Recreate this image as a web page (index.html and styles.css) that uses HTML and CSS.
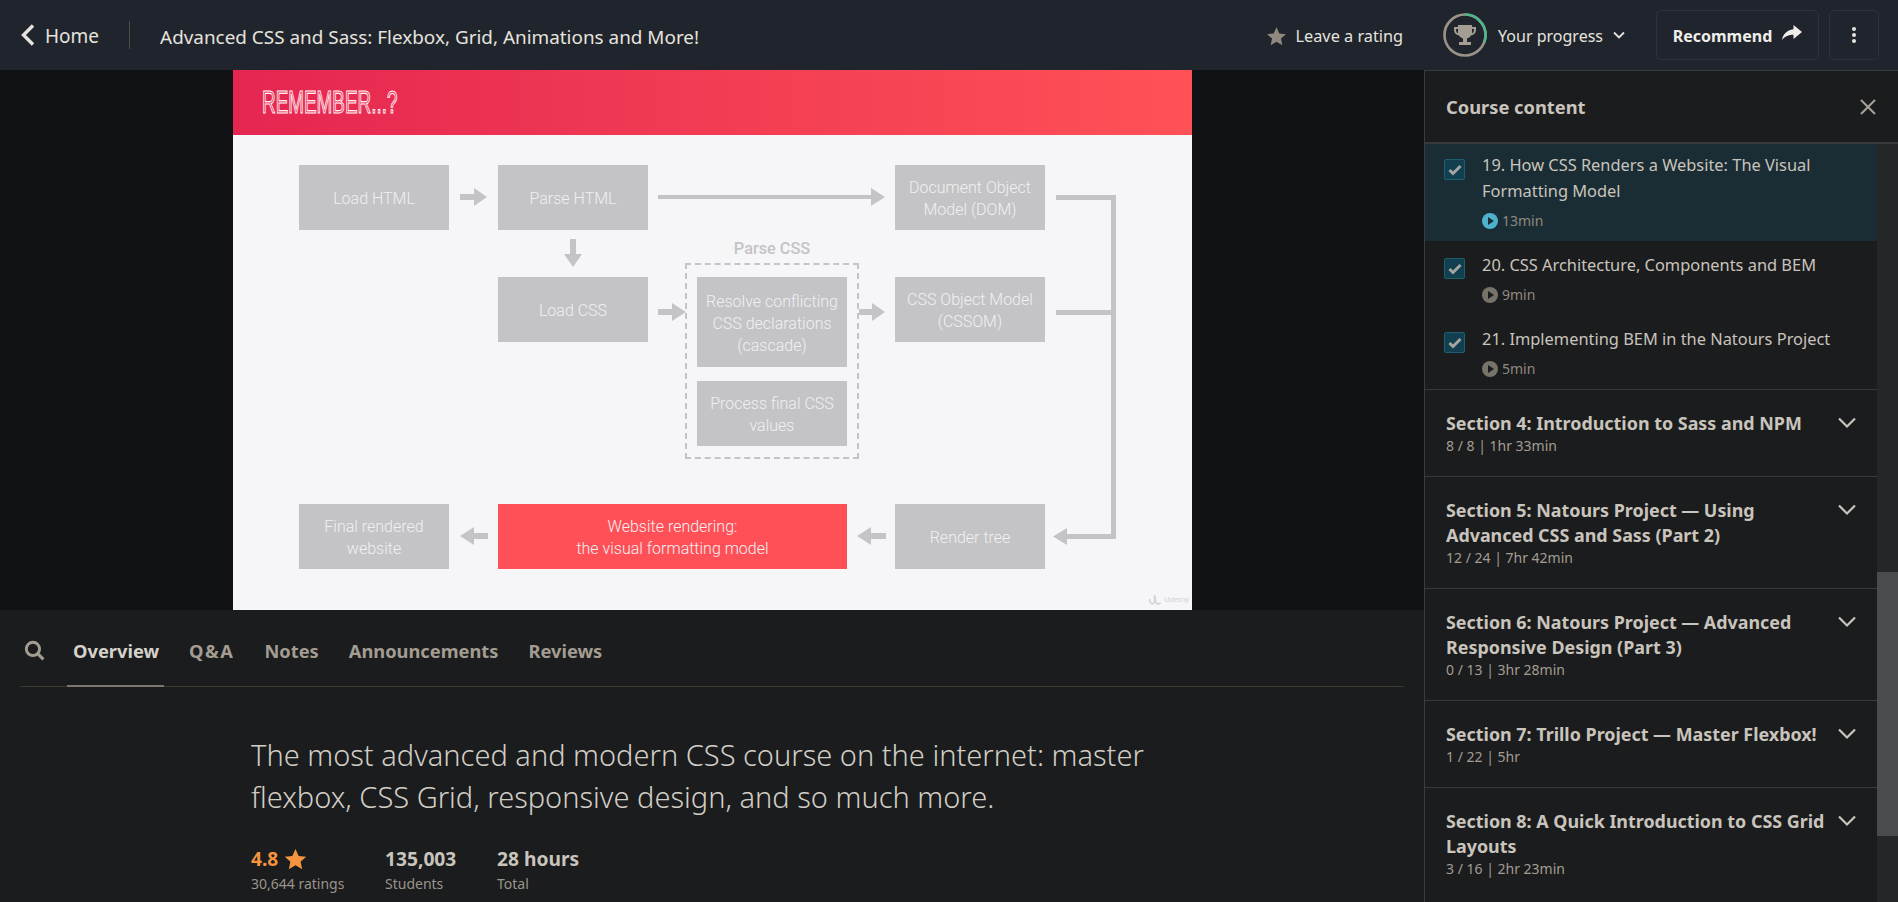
FILE: index.html
```html
<!DOCTYPE html>
<html lang="en">
<head>
    <meta charset="UTF-8">
    <meta name="viewport" content="width=device-width, initial-scale=1.0">
    <title>Advanced CSS and Sass</title>
    <link rel="stylesheet" href="styles.css">
</head>
<body>

    <!-- Top bar -->
    <header class="topbar">
        <a class="home-link">
            <svg class="home-chevron" viewBox="0 0 16 24"><path d="M13 2.5 3.5 12l9.5 9.5" fill="none" stroke="currentColor" stroke-width="3.4"/></svg>
            Home
        </a>
        <span class="topbar-divider"></span>
        <h1 class="course-title">Advanced CSS and Sass: Flexbox, Grid, Animations and More!</h1>

        <a class="rating-link">
            <svg class="icon-star" viewBox="0 0 24 24"><path d="M12 1.500l3.200 7 7.600.8-5.700 5.100 1.600 7.500L12 18l-6.700 3.900 1.600-7.500L1.200 9.300l7.600-.8z" fill="currentColor"/></svg>
            Leave a rating
        </a>
        <a class="progress-link">
            <svg class="progress-ring" viewBox="0 0 44 44">
                <circle cx="22" cy="22" r="20.5" fill="none" stroke="#9a9488" stroke-width="2.6"/>
                <path d="M22 1.500A20.500 20.500 0 0 1 41.300 29" fill="none" stroke="#4fb58a" stroke-width="2.6"/>
                <path d="M15 12h14v2h4v3c0 3-2 5-5 5.500-1 1.500-2.500 2.500-4 3V29h4v3H16v-3h4v-3.500c-1.500-.5-3-1.500-4-3C13 22 11 20 11 17v-3h4zm-2 4v1c0 1.500.8 2.600 2 3.200V16zm16 0v4.200c1.200-.6 2-1.700 2-3.200v-1z" fill="#a39d92"/>
            </svg>
            <span class="progress-text">Your progress</span>
            <svg class="small-chevron" viewBox="0 0 12 8"><path d="M1 1.500l5 5 5-5" fill="none" stroke="currentColor" stroke-width="1.800"/></svg>
        </a>
        <button class="btn btn-recommend">
            Recommend
            <svg class="icon-share" viewBox="0 0 20 16"><path d="M11.500 0 20 7l-8.500 7V9.800C6.500 9.800 3 11.200 0 15c.8-5.500 4.500-9.800 11.500-10.800z" fill="currentColor"/></svg>
        </button>
        <button class="btn btn-more">
            <span class="dot"></span><span class="dot"></span><span class="dot"></span>
        </button>
    </header>

    <div class="layout">
        <main class="main-col">

            <!-- Video area, the slide is a free canvas -->
            <section class="video-area">
                <div class="slide">
                    <div class="slide-head"><span class="slide-title">REMEMBER...?</span></div>

                    <svg class="slide-lines" viewBox="0 0 959 540">
                        <g fill="#c4c3c6">
                            <!-- load html to parse html -->
                            <path d="M227 124h14v-6l13 9-13 9v-6h-14z"/>
                            <!-- parse html to dom -->
                            <path d="M425 125h213v-7l14 9-14 9v-7H425z"/>
                            <!-- parse html to load css -->
                            <path d="M337 169h6v15h6l-9 13-9-13h6z"/>
                            <!-- load css to parse box -->
                            <path d="M425 239h14v-6l14 9-14 9v-6h-14z"/>
                            <!-- parse box to cssom -->
                            <path d="M626 239h13v-6l13 9-13 9v-6h-13z"/>
                            <!-- right connector down to render tree -->
                            <path d="M823 125h60v344h-49v6l-14-8.500 14-8.500v6h44V245h-55v-5h55V130h-55z"/>
                            <!-- render tree to red box -->
                            <path d="M653 463h-15v-6l-14 9 14 9v-6h15z"/>
                            <!-- red box to final -->
                            <path d="M255 463h-14v-6l-14 9 14 9v-6h14z"/>
                        </g>
                    </svg>

                    <div class="parse-box"></div>
                    <span class="parse-label">Parse CSS</span>

                    <div class="node node-load-html">Load HTML</div>
                    <div class="node node-parse-html">Parse HTML</div>
                    <div class="node node-dom">Document Object<br>Model (DOM)</div>
                    <div class="node node-load-css">Load CSS</div>
                    <div class="node node-resolve">Resolve conflicting<br>CSS declarations<br>(cascade)</div>
                    <div class="node node-cssom">CSS Object Model<br>(CSSOM)</div>
                    <div class="node node-process">Process final CSS<br>values</div>
                    <div class="node node-final">Final rendered<br>website</div>
                    <div class="node node-render active">Website rendering:<br>the visual formatting model</div>
                    <div class="node node-tree">Render tree</div>

                    <div class="slide-mark">
                        <svg viewBox="0 0 12 11"><path d="M1 5c-.5 3 1 5 2.500 5S6 8 5.500 1M6.500 3c-.5 4 .5 7 2.500 7 1 0 2-.5 2.500-1.500" fill="none" stroke="#d2d1d6" stroke-width="1.600"/></svg>
                        <span>Udemy</span>
                    </div>
                </div>
            </section>

            <!-- Tabs -->
            <nav class="tabs">
                <svg class="tab-search" viewBox="0 0 20 20"><circle cx="8.500" cy="8.500" r="6.300" fill="none" stroke="currentColor" stroke-width="2.800"/><path d="M13 13l5.500 5.500" stroke="currentColor" stroke-width="3"/></svg>
                <a class="tab active">Overview</a>
                <a class="tab tab-qa">Q&amp;A</a>
                <a class="tab">Notes</a>
                <a class="tab">Announcements</a>
                <a class="tab">Reviews</a>
            </nav>

            <!-- Overview -->
            <section class="overview">
                <p class="lead">The most advanced and modern CSS course on the internet: master flexbox, CSS Grid, responsive design, and so much more.</p>
                <div class="stats">
                    <div class="stat stat-rating">
                        <div class="stat-value">4.8 <svg class="icon-star-big" viewBox="0 0 24 24"><path d="M12 1l3.300 7.300 7.900.8-5.900 5.300 1.700 7.800L12 18.100l-7 4.100 1.700-7.800L.8 9.100l7.900-.8z" fill="currentColor"/></svg></div>
                        <div class="stat-label">30,644 ratings</div>
                    </div>
                    <div class="stat stat-students">
                        <div class="stat-value">135,003</div>
                        <div class="stat-label">Students</div>
                    </div>
                    <div class="stat">
                        <div class="stat-value">28 hours</div>
                        <div class="stat-label">Total</div>
                    </div>
                </div>
            </section>
        </main>

        <!-- Course content sidebar -->
        <aside class="sidebar">
            <div class="sidebar-head">
                <span class="sidebar-title">Course content</span>
                <svg class="icon-close" viewBox="0 0 18 18"><path d="M2 2l14 14M16 2 2 16" stroke="currentColor" stroke-width="2"/></svg>
            </div>
            <div class="sidebar-body">
                <div class="sidebar-list">
                    <div class="lesson current">
                        <span class="check"><svg viewBox="0 0 14 12"><path d="M1.500 6l3.500 3.500 7.500-7.500" fill="none" stroke="currentColor" stroke-width="3"/></svg></span>
                        <div>
                            <div class="lesson-name">19. How CSS Renders a Website: The Visual Formatting Model</div>
                            <div class="lesson-time"><svg class="icon-play" viewBox="0 0 16 16"><circle cx="8" cy="8" r="8" fill="currentColor"/><path d="M6 4l6 4-6 4z" fill="#1a2d35"/></svg>13min</div>
                        </div>
                    </div>
                    <div class="lesson">
                        <span class="check"><svg viewBox="0 0 14 12"><path d="M1.500 6l3.500 3.500 7.500-7.500" fill="none" stroke="currentColor" stroke-width="3"/></svg></span>
                        <div>
                            <div class="lesson-name">20. CSS Architecture, Components and BEM</div>
                            <div class="lesson-time"><svg class="icon-play" viewBox="0 0 16 16"><circle cx="8" cy="8" r="8" fill="currentColor"/><path d="M6 4l6 4-6 4z" fill="#1b1c1e"/></svg>9min</div>
                        </div>
                    </div>
                    <div class="lesson">
                        <span class="check"><svg viewBox="0 0 14 12"><path d="M1.500 6l3.500 3.500 7.500-7.500" fill="none" stroke="currentColor" stroke-width="3"/></svg></span>
                        <div>
                            <div class="lesson-name">21. Implementing BEM in the Natours Project</div>
                            <div class="lesson-time"><svg class="icon-play" viewBox="0 0 16 16"><circle cx="8" cy="8" r="8" fill="currentColor"/><path d="M6 4l6 4-6 4z" fill="#1b1c1e"/></svg>5min</div>
                        </div>
                    </div>

                    <div class="section-row">
                        <div>
                            <div class="section-name">Section 4: Introduction to Sass and NPM</div>
                            <div class="section-meta">8 / 8 | 1hr 33min</div>
                        </div>
                        <svg class="section-chevron" viewBox="0 0 18 12"><path d="M1 1.500l8 8 8-8" fill="none" stroke="currentColor" stroke-width="2.200"/></svg>
                    </div>
                    <div class="section-row">
                        <div>
                            <div class="section-name">Section 5: Natours Project — Using Advanced CSS and Sass (Part 2)</div>
                            <div class="section-meta">12 / 24 | 7hr 42min</div>
                        </div>
                        <svg class="section-chevron" viewBox="0 0 18 12"><path d="M1 1.500l8 8 8-8" fill="none" stroke="currentColor" stroke-width="2.200"/></svg>
                    </div>
                    <div class="section-row">
                        <div>
                            <div class="section-name">Section 6: Natours Project — Advanced Responsive Design (Part 3)</div>
                            <div class="section-meta">0 / 13 | 3hr 28min</div>
                        </div>
                        <svg class="section-chevron" viewBox="0 0 18 12"><path d="M1 1.500l8 8 8-8" fill="none" stroke="currentColor" stroke-width="2.200"/></svg>
                    </div>
                    <div class="section-row">
                        <div>
                            <div class="section-name">Section 7: Trillo Project — Master Flexbox!</div>
                            <div class="section-meta">1 / 22 | 5hr</div>
                        </div>
                        <svg class="section-chevron" viewBox="0 0 18 12"><path d="M1 1.500l8 8 8-8" fill="none" stroke="currentColor" stroke-width="2.200"/></svg>
                    </div>
                    <div class="section-row">
                        <div>
                            <div class="section-name">Section 8: A Quick Introduction to CSS Grid Layouts</div>
                            <div class="section-meta">3 / 16 | 2hr 23min</div>
                        </div>
                        <svg class="section-chevron" viewBox="0 0 18 12"><path d="M1 1.500l8 8 8-8" fill="none" stroke="currentColor" stroke-width="2.200"/></svg>
                    </div>
                </div>
                <div class="scroll-track"><div class="scroll-thumb"></div></div>
            </div>
        </aside>
    </div>

</body>
</html>
```

FILE: styles.css
```css
* {
    box-sizing: border-box;
}

html, body {
    height: 100%;
    margin: 0;
    overflow: hidden;
}

body {
    background-color: #1a1c1e;
    color: #c9c4bc;
    font-family: "Noto Sans", "Open Sans", Arial, sans-serif;
}

/* Top bar */
.topbar {
    display: flex;
    align-items: center;
    height: 70px;
    padding: 0 19px 0 20px;
    background-color: #20252d;
    color: #e6e3de;
    font-size: 17px;
}

.home-link {
    display: flex;
    align-items: center;
    gap: 9px;
    font-size: 19px;
    padding-top: 1px;
}

.home-chevron {
    width: 16px;
    height: 24px;
    margin-top: -2px;
}

.topbar-divider {
    width: 1px;
    height: 28px;
    margin: 0 30px;
    background-color: #4d4c48;
}

.course-title {
    flex: 1;
    margin: 0;
    padding-top: 3px;
    font-size: 18.9px;
    font-weight: 400;
}

.rating-link, .progress-link {
    display: flex;
    align-items: center;
}

.rating-link {
    gap: 9px;
    padding-top: 2px;
    font-size: 16.3px;
}

.icon-star {
    width: 21px;
    height: 21px;
    color: #8f897f;
}

.progress-link {
    gap: 10px;
    margin-left: 40px;
    font-size: 16px;
}

.progress-ring {
    width: 44px;
    height: 44px;
    margin-right: 1px;
}

.progress-text {
    padding-top: 2px;
}

.small-chevron {
    width: 12px;
    height: 8px;
}

.btn {
    display: flex;
    align-items: center;
    justify-content: center;
    height: 50px;
    border: 1px solid #2e323a;
    border-radius: 5px;
    background: transparent;
    color: #f0eeea;
    font-family: inherit;
}

.btn-recommend {
    gap: 10px;
    width: 163px;
    margin-left: 31px;
    padding-top: 2px;
    font-size: 16px;
    font-weight: 700;
}

.icon-share {
    width: 20px;
    height: 16px;
    margin-bottom: 5px;
}

.btn-more {
    flex-direction: column;
    gap: 1.5px;
    width: 50px;
    margin-left: 10px;
}

.dot {
    width: 4.5px;
    height: 4.5px;
    border-radius: 50%;
    background-color: #e6e3de;
}

/* Page columns */
.layout {
    display: flex;
    height: calc(100% - 70px);
}

.main-col {
    flex: 1;
    min-width: 0;
}

/* Video and slide */
.video-area {
    display: flex;
    justify-content: center;
    height: 540px;
    padding-left: 1px;
    background-color: #101215;
}

.slide {
    position: relative;
    width: 959px;
    height: 540px;
    background-color: #f6f5f8;
    overflow: hidden;
}

.slide-head {
    display: flex;
    align-items: center;
    height: 65px;
    padding: 0 0 0 29px;
    background: linear-gradient(90deg, #e52651, #ff5156);
}

.slide-title {
    font-family: "Liberation Sans", Arial, sans-serif;
    font-size: 31.5px;
    color: rgba(255, 255, 255, 0.15);
    -webkit-text-stroke: 1.1px #fff3f5;
    transform: scaleX(0.6);
    transform-origin: left center;
    white-space: nowrap;
}

.slide-lines {
    position: absolute;
    left: 0;
    top: 0;
    width: 959px;
    height: 540px;
}

.node {
    position: absolute;
    display: flex;
    align-items: center;
    justify-content: center;
    padding-top: 2px;
    background-color: #c4c3c6;
    color: #f1f0f2;
    font-family: Roboto, Arial, sans-serif;
    font-size: 16px;
    font-weight: 300;
    line-height: 22px;
    text-align: center;
}

.node.active {
    background-color: #ff5058;
}

.node-load-html { left: 66px; top: 95px; width: 150px; height: 65px; }
.node-parse-html { left: 265px; top: 95px; width: 150px; height: 65px; }
.node-dom { left: 662px; top: 95px; width: 150px; height: 65px; }
.node-load-css { left: 265px; top: 207px; width: 150px; height: 65px; }
.node-cssom { left: 662px; top: 207px; width: 150px; height: 65px; }
.node-resolve { left: 464px; top: 207px; width: 150px; height: 90px; padding-top: 3px; }
.node-process { left: 464px; top: 311px; width: 150px; height: 65px; }
.node-final { left: 66px; top: 434px; width: 150px; height: 65px; }
.node-render { left: 265px; top: 434px; width: 349px; height: 65px; }
.node-tree { left: 662px; top: 434px; width: 150px; height: 65px; }

.parse-box {
    position: absolute;
    left: 452px;
    top: 193px;
    width: 174px;
    height: 196px;
    border: 2px dashed #c4c3c6;
}

.parse-label {
    position: absolute;
    left: 452px;
    top: 169px;
    width: 174px;
    color: #c4c3c6;
    font-family: Roboto, Arial, sans-serif;
    font-size: 16.3px;
    font-weight: 500;
    text-align: center;
}

.slide-mark {
    position: absolute;
    right: 3px;
    bottom: 5px;
    display: flex;
    align-items: center;
    gap: 3px;
    color: #d2d1d6;
    font-family: Roboto, Arial, sans-serif;
    font-size: 8px;
}

.slide-mark svg {
    width: 12px;
    height: 11px;
}

/* Tabs */
.tabs {
    display: flex;
    align-items: center;
    gap: 30px;
    height: 77px;
    margin: 0 20px;
    padding: 5px 0 0 4px;
    border-bottom: 1px solid #3c3a30;
    color: #a39d91;
    font-size: 18.3px;
    font-weight: 700;
}

.tab-search {
    width: 21px;
    height: 21px;
    margin-right: -2px;
}

.tab {
    position: relative;
    white-space: nowrap;
}

.tab-qa {
    letter-spacing: 1.5px;
}

.tab.active {
    color: #d6d2cb;
}

.tab.active::after {
    content: "";
    position: absolute;
    left: -6px;
    right: -5px;
    bottom: -24px;
    height: 2px;
    background-color: #7c766c;
}

/* Overview */
.overview {
    padding: 47px 0 0 251px;
}

.lead {
    width: 910px;
    margin: 0;
    font-size: 29px;
    line-height: 42px;
    font-weight: 300;
    color: #d2cdc5;
}

.stats {
    display: flex;
    margin-top: 27px;
}

.stat {
    display: flex;
    flex-direction: column;
}

.stat-rating {
    width: 134px;
}

.stat-students {
    width: 112px;
}

.stat-value {
    display: flex;
    align-items: center;
    gap: 6px;
    font-size: 19.2px;
    font-weight: 700;
    line-height: 28px;
}

.stat-rating .stat-value {
    color: #f5943f;
}

.icon-star-big {
    width: 23px;
    height: 23px;
}

.stat-label {
    margin-top: 1px;
    color: #9a948a;
    font-size: 14px;
    line-height: 20px;
}

/* Sidebar */
.sidebar {
    display: flex;
    flex-direction: column;
    width: 474px;
    border-left: 1px solid #3a3d40;
    border-top: 1px solid #3a3d40;
    background-color: #1b1c1e;
}

.sidebar-head {
    display: flex;
    align-items: center;
    justify-content: space-between;
    height: 73px;
    padding: 0 21px;
    border-bottom: 2px solid #37393b;
    font-size: 18.3px;
    font-weight: 700;
}

.icon-close {
    width: 18px;
    height: 18px;
    color: #a8a39a;
}

.sidebar-body {
    display: flex;
    flex: 1;
    min-height: 0;
}

.sidebar-list {
    flex: 1;
    min-width: 0;
    overflow: hidden;
}

.scroll-track {
    position: relative;
    width: 21px;
    background-color: #242627;
}

.scroll-thumb {
    position: absolute;
    left: 0;
    right: 0;
    top: 428px;
    height: 264px;
    background-color: #484c4f;
}

.lesson {
    display: flex;
    gap: 17px;
    padding: 11px 20px 10px 19px;
}

.lesson.current {
    background-color: #1a2d35;
    padding-top: 8px;
}

.check {
    display: flex;
    align-items: center;
    justify-content: center;
    flex: none;
    width: 21px;
    height: 21px;
    margin-top: 6px;
    border: 1px solid #1c6070;
    border-radius: 2px;
    background-color: #123f4f;
    color: #a3a6a3;
}

.current .check {
    margin-top: 7px;
}

.check svg {
    width: 14px;
    height: 12px;
}

.lesson-name {
    font-size: 16.4px;
    line-height: 26px;
}

.lesson-time {
    display: flex;
    align-items: center;
    gap: 4px;
    margin-top: 7px;
    color: #8f897f;
    font-size: 14px;
    line-height: 20px;
}

.current .lesson-time svg {
    color: #4eb2cf;
}

.icon-play {
    width: 16px;
    height: 16px;
    color: #77726a;
}

.section-row {
    display: flex;
    justify-content: space-between;
    gap: 8px;
    padding: 21px 21px 20px;
    border-top: 1px solid #36383a;
}

.section-name {
    font-size: 17.9px;
    font-weight: 700;
    line-height: 25px;
}

.section-meta {
    color: #a39d92;
    font-size: 14px;
    line-height: 20px;
}

.section-chevron {
    flex: none;
    width: 18px;
    height: 12px;
    margin-top: 6px;
}
```
